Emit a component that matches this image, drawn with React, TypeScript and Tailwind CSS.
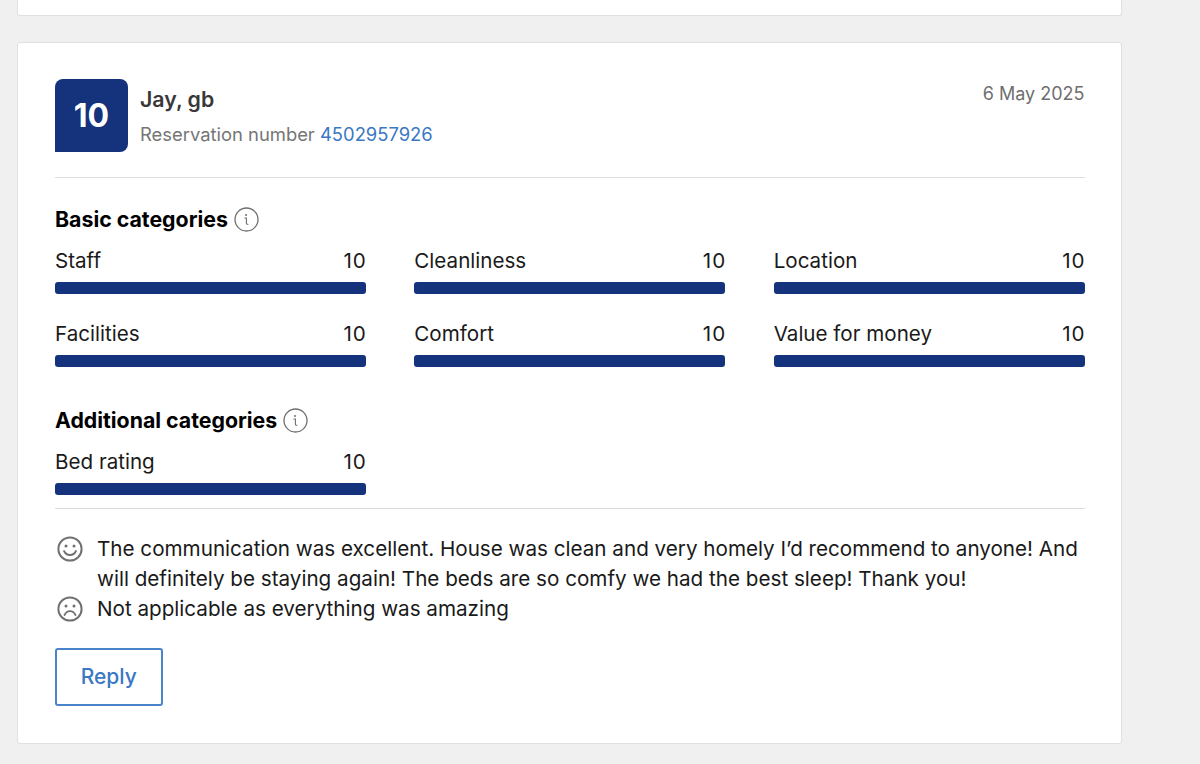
const BLUE = "bg-[#14337c]";

function InfoIcon() {
  return (
    <svg width="25" height="25" viewBox="0 0 25 25" fill="none" className="ml-[6px] shrink-0">
      <circle cx="12.500" cy="12.500" r="11.500" stroke="#6f6f6f" strokeWidth="1.300" />
      <circle cx="12" cy="8" r="1" fill="#6f6f6f" />
      <path d="M10.800 11h1.600v5.200c0 .9.5 1.200 1.600 1" stroke="#6f6f6f" strokeWidth="1.100" strokeLinecap="round" />
    </svg>
  );
}

function Face({ sad }: { sad?: boolean }) {
  return (
    <svg width="26" height="26" viewBox="0 0 26 26" fill="none" className="shrink-0">
      <circle cx="13" cy="13" r="11.600" stroke="#707070" strokeWidth="2" />
      <circle cx="9" cy="10" r="1.500" fill="#707070" />
      <circle cx="17" cy="10" r="1.500" fill="#707070" />
      {sad ? (
        <path d="M7.500 19c1.400-2.600 3.200-3.800 5.500-3.800s4.100 1.200 5.500 3.800" stroke="#707070" strokeWidth="1.800" strokeLinecap="round" />
      ) : (
        <path d="M7 15c1.300 2.700 3.300 4 6 4s4.700-1.300 6-4" stroke="#707070" strokeWidth="1.800" strokeLinecap="round" />
      )}
    </svg>
  );
}

function Rating({ label }: { label: string }) {
  return (
    <div>
      <div className="flex justify-between h-[30px] items-center text-[20.600px] text-[#1a1a1a]">
        <span>{label}</span>
        <span className="tracking-[1px] -mr-[1px]">10</span>
      </div>
      <div className={`h-[12px] mt-[6px] rounded-[3px] ${BLUE}`} />
    </div>
  );
}

function Heading({ children }: { children: string }) {
  return (
    <div className="flex items-center h-[30px] text-[21.300px] font-bold text-black">
      <span className="pt-[1px]">{children}</span>
      <InfoIcon />
    </div>
  );
}

export default function App() {
  return (
    <div className="h-[764px] overflow-hidden bg-[#f0f0f0] pl-[17px] w-[1200px] font-['Inter',sans-serif]">
      <div className="w-[1105px] h-[16px] bg-white border border-t-0 border-[#e0e0e0] rounded-b-[3px]" />
      <div className="w-[1105px] h-[702px] mt-[26px] bg-white border border-[#e0e0e0] rounded-[3px] pl-[37px] pr-[36.500px] pt-[36px]">
        <div className="flex justify-between h-[99px] border-b border-[#dcdcdc]">
          <div className="flex">
            <div className={`w-[73px] h-[73px] ${BLUE} text-white rounded-[8px] rounded-bl-none flex items-center justify-center pt-[1px] text-[32px] font-bold`}>
              10
            </div>
            <div className="ml-[12px]">
              <div className="text-[21.300px] font-semibold text-[#383838] h-[30px] mt-[5px] leading-[30px]">Jay, gb</div>
              <div className="text-[18.400px] text-[#767676] mt-[5px] leading-[31px]">
                Reservation number <span className="text-[#3a78c4]">4502957926</span>
              </div>
            </div>
          </div>
          <div className="text-[18px] text-[#6f6f6f] leading-[30px]">6 May 2025</div>
        </div>

        <div className="mt-[26px]">
          <Heading>Basic categories</Heading>
        </div>
        <div className="grid grid-cols-3 gap-x-[48.500px] gap-y-[25px] mt-[12px]">
          {["Staff", "Cleanliness", "Location", "Facilities", "Comfort", "Value for money"].map(l => (
            <Rating key={l} label={l} />
          ))}
        </div>

        <div className="mt-[38px]">
          <Heading>Additional categories</Heading>
        </div>
        <div className="grid grid-cols-3 gap-x-[48.500px] mt-[12px]">
          <Rating label="Bed rating" />
        </div>

        <div className="border-t border-[#dcdcdc] mt-[13px] pt-[25px] text-[20.650px] leading-[30px] text-[#1a1a1a]">
          <div className="flex gap-[14px] pl-[2px]">
            <div className="pt-[2px]"><Face /></div>
            <p>
              The communication was excellent. House was clean and very homely I’d recommend to anyone! And will definitely be staying again! The beds are so comfy we had the best sleep! Thank you!
            </p>
          </div>
          <div className="flex gap-[14px] pl-[2px]">
            <div className="pt-[2px]"><Face sad /></div>
            <p>Not applicable as everything was amazing</p>
          </div>
        </div>

        <button className="mt-[24px] w-[107.500px] h-[58px] border-2 border-[#4a84cb] rounded-[3px] text-[21px] font-medium text-[#3a78c4]">
          Reply
        </button>
      </div>
    </div>
  );
}
